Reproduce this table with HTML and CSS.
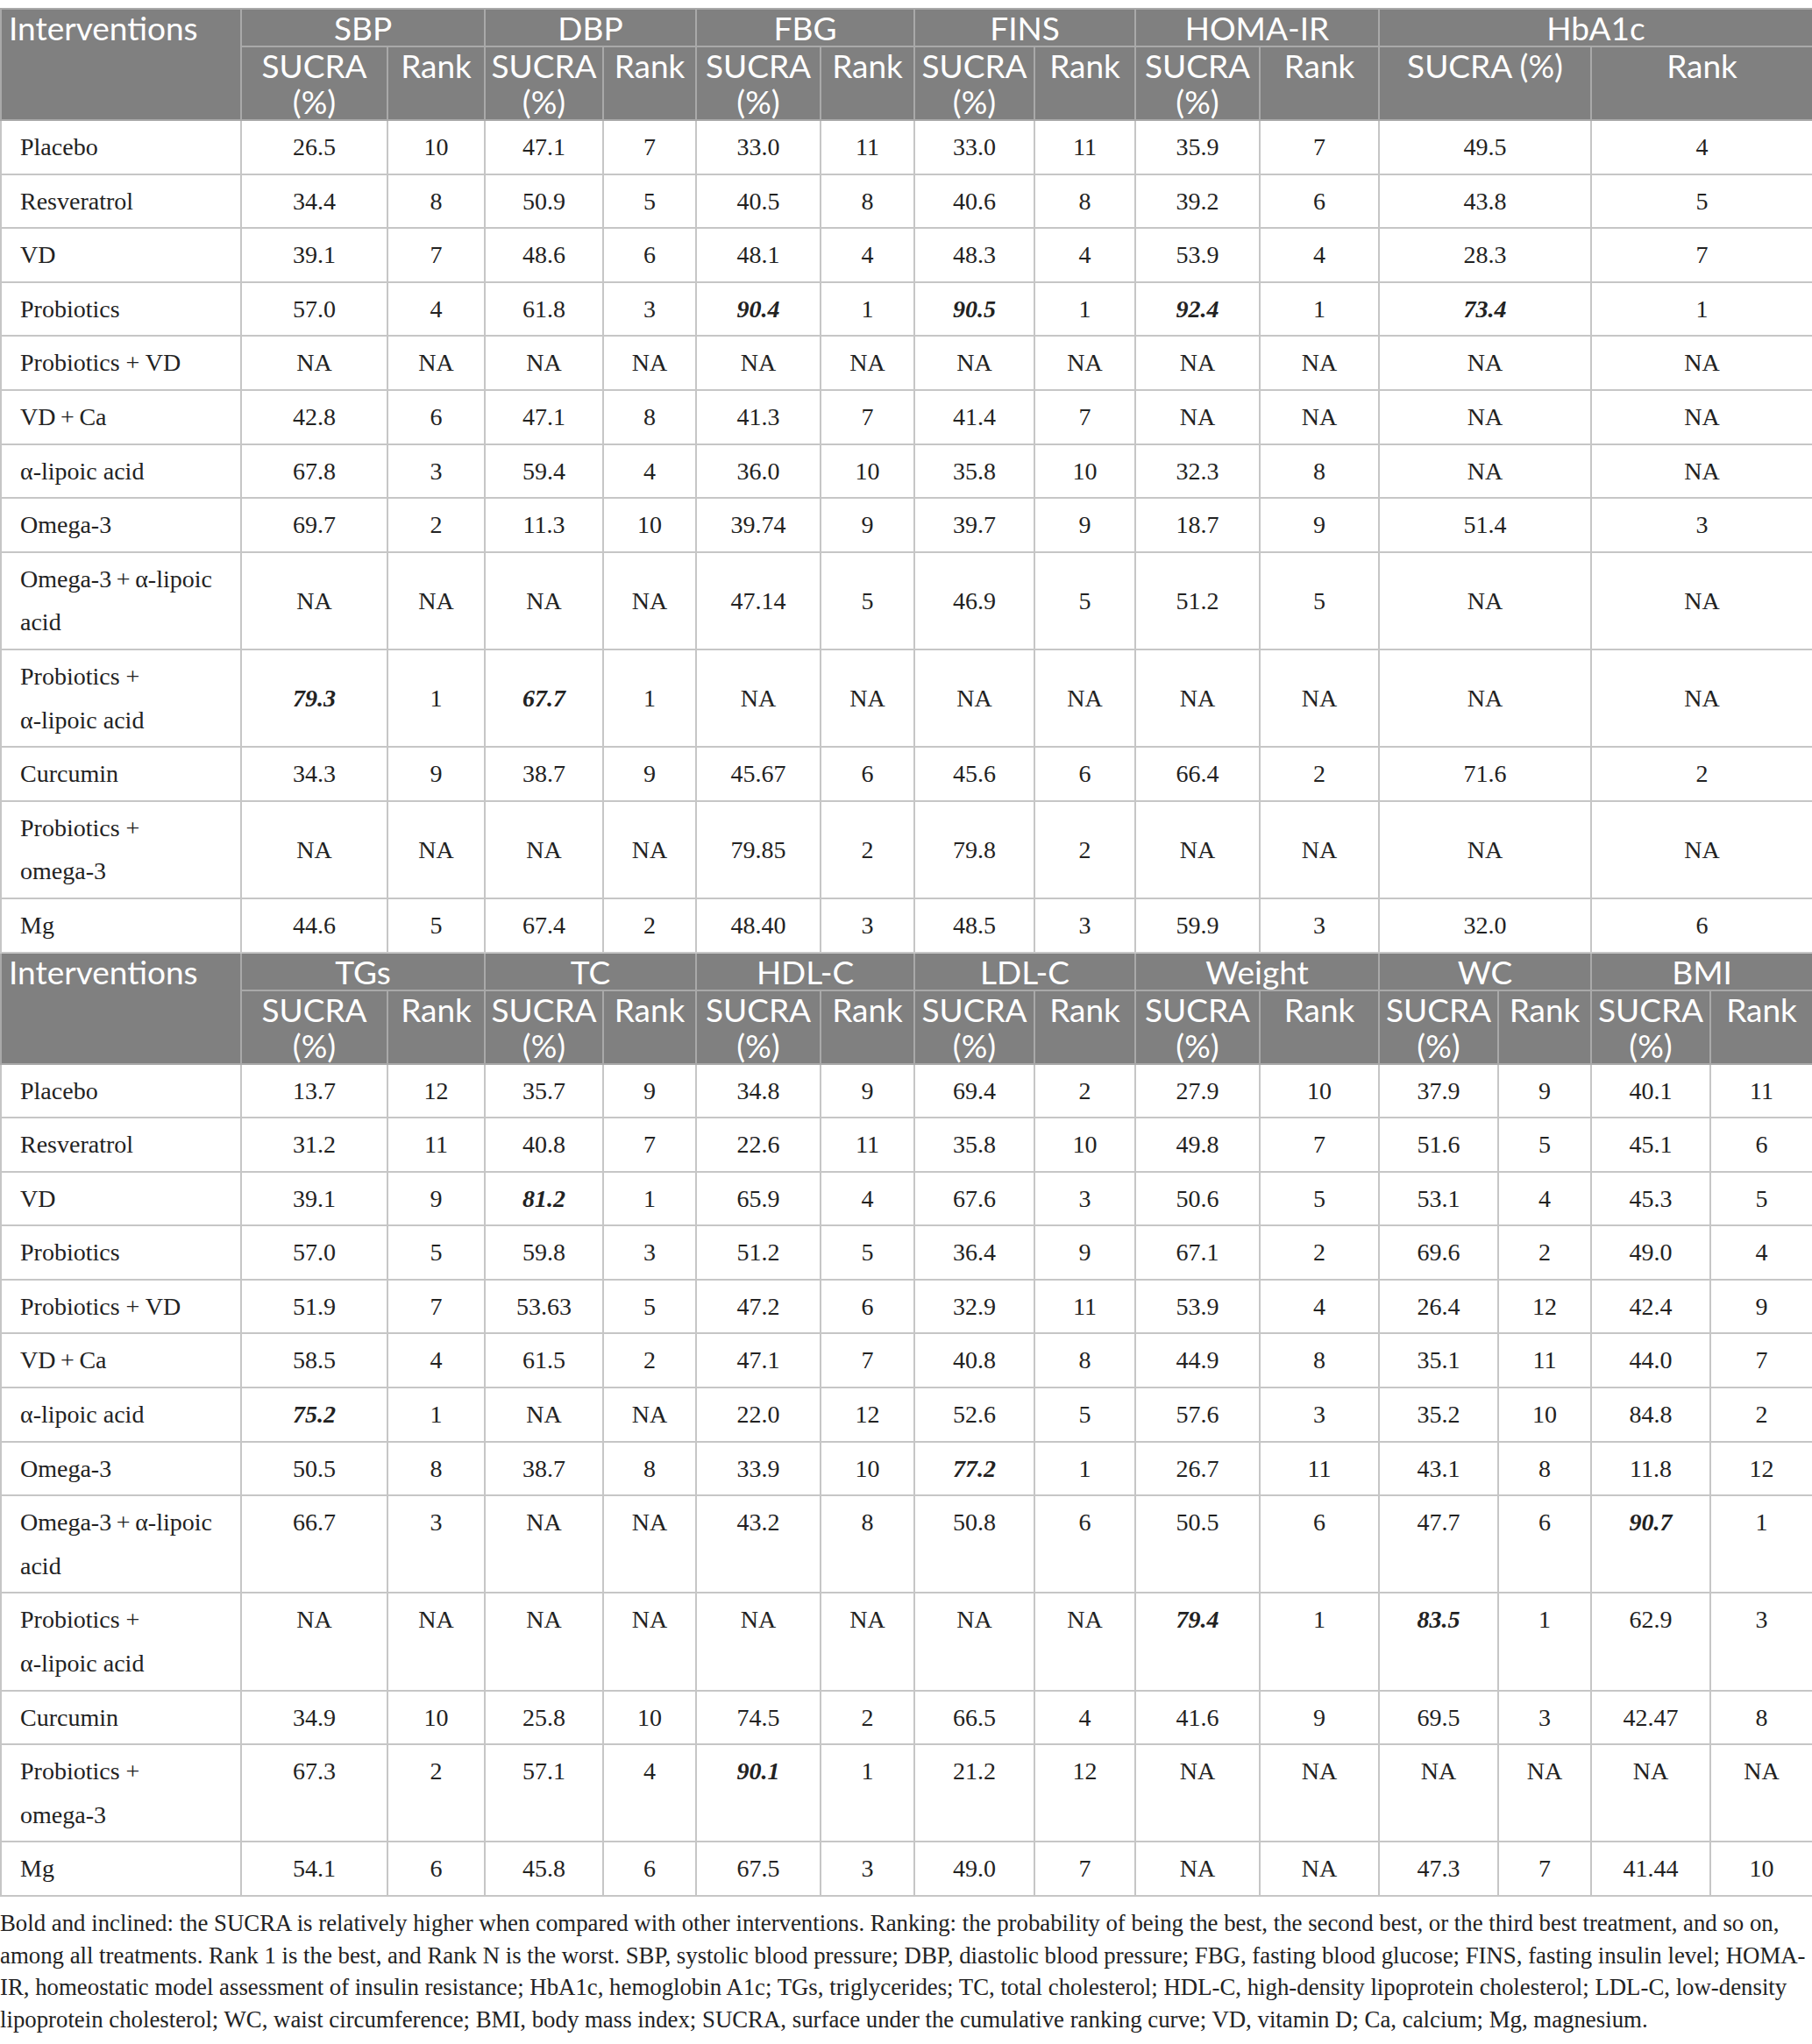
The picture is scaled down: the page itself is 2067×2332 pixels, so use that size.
FILE: index.html
```html
<!DOCTYPE html>
<html lang="en">
<head>
  <meta charset="UTF-8" />
  <title>SUCRA and rank of interventions</title>
  <link rel="stylesheet" href="styles.css">
</head>
<body>
  <table class="sucra">
    <colgroup>
      <col style="width:274px"><col style="width:167px"><col style="width:111px"><col style="width:135px"><col style="width:106px">
      <col style="width:142px"><col style="width:107px"><col style="width:137px"><col style="width:115px"><col style="width:142px">
      <col style="width:136px"><col style="width:136px"><col style="width:106px"><col style="width:136px"><col style="width:117px">
    </colgroup>

    <tbody class="mid">
      <tr>
        <th rowspan="2" class="label">Interventions</th>
        <th colspan="2">SBP</th><th colspan="2">DBP</th><th colspan="2">FBG</th><th colspan="2">FINS</th><th colspan="2">HOMA-IR</th><th colspan="4">HbA1c</th>
      </tr>
      <tr>
        <th>SUCRA (%)</th><th>Rank</th><th>SUCRA (%)</th><th>Rank</th><th>SUCRA (%)</th><th>Rank</th><th>SUCRA (%)</th><th>Rank</th><th>SUCRA (%)</th><th>Rank</th><th colspan="2">SUCRA (%)</th><th colspan="2">Rank</th>
      </tr>
      <tr><td class="name">Placebo</td><td>26.5</td><td>10</td><td>47.1</td><td>7</td><td>33.0</td><td>11</td><td>33.0</td><td>11</td><td>35.9</td><td>7</td><td colspan="2">49.5</td><td colspan="2">4</td></tr>
      <tr><td class="name">Resveratrol</td><td>34.4</td><td>8</td><td>50.9</td><td>5</td><td>40.5</td><td>8</td><td>40.6</td><td>8</td><td>39.2</td><td>6</td><td colspan="2">43.8</td><td colspan="2">5</td></tr>
      <tr><td class="name">VD</td><td>39.1</td><td>7</td><td>48.6</td><td>6</td><td>48.1</td><td>4</td><td>48.3</td><td>4</td><td>53.9</td><td>4</td><td colspan="2">28.3</td><td colspan="2">7</td></tr>
      <tr><td class="name">Probiotics</td><td>57.0</td><td>4</td><td>61.8</td><td>3</td><td class="best">90.4</td><td>1</td><td class="best">90.5</td><td>1</td><td class="best">92.4</td><td>1</td><td colspan="2" class="best">73.4</td><td colspan="2">1</td></tr>
      <tr><td class="name">Probiotics + VD</td><td>NA</td><td>NA</td><td>NA</td><td>NA</td><td>NA</td><td>NA</td><td>NA</td><td>NA</td><td>NA</td><td>NA</td><td colspan="2">NA</td><td colspan="2">NA</td></tr>
      <tr><td class="name">VD&thinsp;+&thinsp;Ca</td><td>42.8</td><td>6</td><td>47.1</td><td>8</td><td>41.3</td><td>7</td><td>41.4</td><td>7</td><td>NA</td><td>NA</td><td colspan="2">NA</td><td colspan="2">NA</td></tr>
      <tr><td class="name">α-lipoic acid</td><td>67.8</td><td>3</td><td>59.4</td><td>4</td><td>36.0</td><td>10</td><td>35.8</td><td>10</td><td>32.3</td><td>8</td><td colspan="2">NA</td><td colspan="2">NA</td></tr>
      <tr><td class="name">Omega-3</td><td>69.7</td><td>2</td><td>11.3</td><td>10</td><td>39.74</td><td>9</td><td>39.7</td><td>9</td><td>18.7</td><td>9</td><td colspan="2">51.4</td><td colspan="2">3</td></tr>
      <tr><td class="name">Omega-3&thinsp;+&thinsp;<span class="nb">α-lipoic</span> acid</td><td>NA</td><td>NA</td><td>NA</td><td>NA</td><td>47.14</td><td>5</td><td>46.9</td><td>5</td><td>51.2</td><td>5</td><td colspan="2">NA</td><td colspan="2">NA</td></tr>
      <tr><td class="name">Probiotics + <span class="nb">α-lipoic</span> acid</td><td class="best">79.3</td><td>1</td><td class="best">67.7</td><td>1</td><td>NA</td><td>NA</td><td>NA</td><td>NA</td><td>NA</td><td>NA</td><td colspan="2">NA</td><td colspan="2">NA</td></tr>
      <tr><td class="name">Curcumin</td><td>34.3</td><td>9</td><td>38.7</td><td>9</td><td>45.67</td><td>6</td><td>45.6</td><td>6</td><td>66.4</td><td>2</td><td colspan="2">71.6</td><td colspan="2">2</td></tr>
      <tr><td class="name">Probiotics + omega-3</td><td>NA</td><td>NA</td><td>NA</td><td>NA</td><td>79.85</td><td>2</td><td>79.8</td><td>2</td><td>NA</td><td>NA</td><td colspan="2">NA</td><td colspan="2">NA</td></tr>
      <tr><td class="name">Mg</td><td>44.6</td><td>5</td><td>67.4</td><td>2</td><td>48.40</td><td>3</td><td>48.5</td><td>3</td><td>59.9</td><td>3</td><td colspan="2">32.0</td><td colspan="2">6</td></tr>
    </tbody>

    <tbody class="top">
      <tr>
        <th rowspan="2" class="label">Interventions</th>
        <th colspan="2">TGs</th><th colspan="2">TC</th><th colspan="2">HDL-C</th><th colspan="2">LDL-C</th><th colspan="2">Weight</th><th colspan="2">WC</th><th colspan="2">BMI</th>
      </tr>
      <tr>
        <th>SUCRA (%)</th><th>Rank</th><th>SUCRA (%)</th><th>Rank</th><th>SUCRA (%)</th><th>Rank</th><th>SUCRA (%)</th><th>Rank</th><th>SUCRA (%)</th><th>Rank</th><th>SUCRA (%)</th><th>Rank</th><th>SUCRA (%)</th><th>Rank</th>
      </tr>
      <tr><td class="name">Placebo</td><td>13.7</td><td>12</td><td>35.7</td><td>9</td><td>34.8</td><td>9</td><td>69.4</td><td>2</td><td>27.9</td><td>10</td><td>37.9</td><td>9</td><td>40.1</td><td>11</td></tr>
      <tr><td class="name">Resveratrol</td><td>31.2</td><td>11</td><td>40.8</td><td>7</td><td>22.6</td><td>11</td><td>35.8</td><td>10</td><td>49.8</td><td>7</td><td>51.6</td><td>5</td><td>45.1</td><td>6</td></tr>
      <tr><td class="name">VD</td><td>39.1</td><td>9</td><td class="best">81.2</td><td>1</td><td>65.9</td><td>4</td><td>67.6</td><td>3</td><td>50.6</td><td>5</td><td>53.1</td><td>4</td><td>45.3</td><td>5</td></tr>
      <tr><td class="name">Probiotics</td><td>57.0</td><td>5</td><td>59.8</td><td>3</td><td>51.2</td><td>5</td><td>36.4</td><td>9</td><td>67.1</td><td>2</td><td>69.6</td><td>2</td><td>49.0</td><td>4</td></tr>
      <tr><td class="name">Probiotics + VD</td><td>51.9</td><td>7</td><td>53.63</td><td>5</td><td>47.2</td><td>6</td><td>32.9</td><td>11</td><td>53.9</td><td>4</td><td>26.4</td><td>12</td><td>42.4</td><td>9</td></tr>
      <tr><td class="name">VD&thinsp;+&thinsp;Ca</td><td>58.5</td><td>4</td><td>61.5</td><td>2</td><td>47.1</td><td>7</td><td>40.8</td><td>8</td><td>44.9</td><td>8</td><td>35.1</td><td>11</td><td>44.0</td><td>7</td></tr>
      <tr><td class="name">α-lipoic acid</td><td class="best">75.2</td><td>1</td><td>NA</td><td>NA</td><td>22.0</td><td>12</td><td>52.6</td><td>5</td><td>57.6</td><td>3</td><td>35.2</td><td>10</td><td>84.8</td><td>2</td></tr>
      <tr><td class="name">Omega-3</td><td>50.5</td><td>8</td><td>38.7</td><td>8</td><td>33.9</td><td>10</td><td class="best">77.2</td><td>1</td><td>26.7</td><td>11</td><td>43.1</td><td>8</td><td>11.8</td><td>12</td></tr>
      <tr><td class="name">Omega-3&thinsp;+&thinsp;<span class="nb">α-lipoic</span> acid</td><td>66.7</td><td>3</td><td>NA</td><td>NA</td><td>43.2</td><td>8</td><td>50.8</td><td>6</td><td>50.5</td><td>6</td><td>47.7</td><td>6</td><td class="best">90.7</td><td>1</td></tr>
      <tr><td class="name">Probiotics + <span class="nb">α-lipoic</span> acid</td><td>NA</td><td>NA</td><td>NA</td><td>NA</td><td>NA</td><td>NA</td><td>NA</td><td>NA</td><td class="best">79.4</td><td>1</td><td class="best">83.5</td><td>1</td><td>62.9</td><td>3</td></tr>
      <tr><td class="name">Curcumin</td><td>34.9</td><td>10</td><td>25.8</td><td>10</td><td>74.5</td><td>2</td><td>66.5</td><td>4</td><td>41.6</td><td>9</td><td>69.5</td><td>3</td><td>42.47</td><td>8</td></tr>
      <tr><td class="name">Probiotics + omega-3</td><td>67.3</td><td>2</td><td>57.1</td><td>4</td><td class="best">90.1</td><td>1</td><td>21.2</td><td>12</td><td>NA</td><td>NA</td><td>NA</td><td>NA</td><td>NA</td><td>NA</td></tr>
      <tr><td class="name">Mg</td><td>54.1</td><td>6</td><td>45.8</td><td>6</td><td>67.5</td><td>3</td><td>49.0</td><td>7</td><td>NA</td><td>NA</td><td>47.3</td><td>7</td><td>41.44</td><td>10</td></tr>
    </tbody>
  </table>

  <p class="note">Bold and inclined: the SUCRA is relatively higher when compared with other interventions. Ranking: the probability of being the best, the second best, or the third best treatment, and so on, among all treatments. Rank 1 is the best, and Rank N is the worst. SBP, systolic blood pressure; DBP, diastolic blood pressure; FBG, fasting blood glucose; FINS, fasting insulin level; HOMA-IR, homeostatic model assessment of insulin resistance; HbA1c, hemoglobin A1c; TGs, triglycerides; TC, total cholesterol; HDL-C, high-density lipoprotein cholesterol; LDL-C, low-density lipoprotein cholesterol; WC, waist circumference; BMI, body mass index; SUCRA, surface under the cumulative ranking curve; VD, vitamin D; Ca, calcium; Mg, magnesium.</p>
</body>
</html>
```

FILE: styles.css
```css
body {
  margin: 0;
  padding-top: 9px;
  font-family: "Liberation Serif", "Times New Roman", serif;
  color: #222;
  background: #fff;
}

.sucra {
  width: 2067px;
  border-collapse: collapse;
  table-layout: fixed;
}

.sucra th {
  background: #808080;
  color: #fff;
  font-family: Lato, "Open Sans", sans-serif;
  font-weight: 400;
  font-size: 37px;
  line-height: 41px;
  padding: 0 6px;
  border: 2px solid #a9a9a9;
  text-align: center;
  vertical-align: top;
}

.sucra th.label {
  text-align: left;
  padding-left: 8px;
}

.sucra td {
  font-size: 28px;
  line-height: 49.6px;
  padding: 5px 6px;
  border: 2px solid #c6c6c6;
  text-align: center;
  vertical-align: middle;
}

.sucra td.name {
  text-align: left;
  padding-left: 21px;
  padding-right: 32px;
}

.nb {
  white-space: nowrap;
}

.top td {
  vertical-align: top;
}

.best {
  font-weight: bold;
  font-style: italic;
}

.note {
  font-size: 26.8px;
  line-height: 36.5px;
  margin: 12px 0 0;
}
```
